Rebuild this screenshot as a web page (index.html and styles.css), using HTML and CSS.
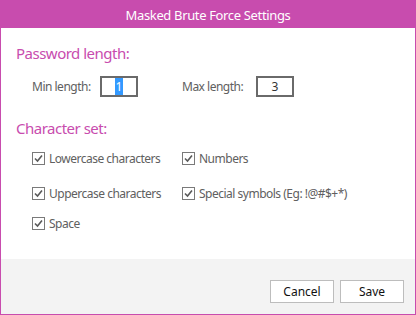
FILE: index.html
```html
<!DOCTYPE html>
<html>
<head>
    <title>Masked Brute Force Settings</title>
    <link rel="stylesheet" href="styles.css">
</head>
<body>
    <div class="window">
        <div class="titlebar">Masked Brute Force Settings</div>
        <div class="frame">
            <div class="content">
                <h2 class="section-title">Password length:</h2>
                <div class="length-row">
                    <label class="field-label min-label">Min length:</label>
                    <div class="num-box"><span class="selected">1</span></div>
                    <label class="field-label max-label">Max length:</label>
                    <div class="num-box">3</div>
                </div>

                <h2 class="section-title charset-title">Character set:</h2>
                <div class="check-grid">
                    <div class="check row1"><span class="box"><svg width="13" height="13" viewBox="0 0 13 13"><rect x="0.5" y="0.5" width="12" height="12" fill="#fff" stroke="#7a7a7a"/><path d="M3 6.5 L5.5 9 L10 3.5" fill="none" stroke="#5a5a5a" stroke-width="1.6"/></svg></span>Lowercase characters</div>
                    <div class="check row1"><span class="box"><svg width="13" height="13" viewBox="0 0 13 13"><rect x="0.5" y="0.5" width="12" height="12" fill="#fff" stroke="#7a7a7a"/><path d="M3 6.5 L5.5 9 L10 3.5" fill="none" stroke="#5a5a5a" stroke-width="1.6"/></svg></span>Numbers</div>
                    <div class="check row2"><span class="box"><svg width="13" height="13" viewBox="0 0 13 13"><rect x="0.5" y="0.5" width="12" height="12" fill="#fff" stroke="#7a7a7a"/><path d="M3 6.5 L5.5 9 L10 3.5" fill="none" stroke="#5a5a5a" stroke-width="1.6"/></svg></span>Uppercase characters</div>
                    <div class="check row2"><span class="box"><svg width="13" height="13" viewBox="0 0 13 13"><rect x="0.5" y="0.5" width="12" height="12" fill="#fff" stroke="#7a7a7a"/><path d="M3 6.5 L5.5 9 L10 3.5" fill="none" stroke="#5a5a5a" stroke-width="1.6"/></svg></span>Special symbols (Eg: !@#$+*)</div>
                    <div class="check row3"><span class="box"><svg width="13" height="13" viewBox="0 0 13 13"><rect x="0.5" y="0.5" width="12" height="12" fill="#fff" stroke="#7a7a7a"/><path d="M3 6.5 L5.5 9 L10 3.5" fill="none" stroke="#5a5a5a" stroke-width="1.6"/></svg></span>Space</div>
                </div>
            </div>
            <div class="footer">
                <button type="button">Cancel</button>
                <button type="button">Save</button>
            </div>
        </div>
    </div>
</body>
</html>
```

FILE: styles.css
```css
body {
    margin: 0;
    font-family: "Noto Sans", "Open Sans", sans-serif;
    background-color: #fff;
}

.window {
    width: 416px;
    height: 315px;
    display: flex;
    flex-direction: column;
}

.titlebar {
    height: 28px;
    line-height: 30px;
    background-color: #c84cae;
    color: #fff;
    text-align: center;
    font-size: 13px;
    letter-spacing: -0.35px;
}

.frame {
    flex: 1;
    display: flex;
    flex-direction: column;
    border: 1px solid #c84cae;
    border-top: none;
}

.content {
    flex: 1;
    background-color: #fff;
    padding: 14px 0 0 15px;
}

.section-title {
    margin: 0;
    font-weight: normal;
    font-size: 15px;
    letter-spacing: -0.5px;
    line-height: 22px;
    color: #c84cae;
}

.length-row {
    display: flex;
    align-items: center;
    margin-top: 12px;
    padding-left: 16px;
}

.field-label {
    font-size: 12px;
    letter-spacing: -0.5px;
    color: #606060;
}

.min-label {
    width: 68px;
}

.max-label {
    margin-left: 44px;
    width: 74px;
}

.num-box {
    width: 34px;
    height: 17px;
    border: 2px solid #6a6a6a;
    font-size: 12px;
    line-height: 17px;
    text-align: center;
    color: #333;
}

.selected {
    background-color: #3399ff;
    color: #fff;
    padding: 0 1px;
}

.charset-title {
    margin-top: 20px;
}

.check-grid {
    display: grid;
    grid-template-columns: 150px auto;
    padding-left: 16px;
    margin-top: 10px;
}

.check {
    display: flex;
    align-items: center;
    font-size: 12px;
    letter-spacing: -0.5px;
    color: #606060;
    height: 18px;
}

.row2 {
    margin-top: 17px;
}

.row3 {
    margin-top: 12px;
}

.box {
    display: inline-flex;
    margin-right: 4px;
}

.footer {
    height: 55px;
    background-color: #f3f3f3;
    display: flex;
    justify-content: flex-end;
    align-items: flex-start;
    gap: 6px;
    padding: 21px 11px 0 0;
    box-sizing: border-box;
}

button {
    width: 64px;
    height: 23px;
    background-color: #fff;
    border: 1px solid #bdbdbd;
    font-family: "Noto Sans", "Open Sans", sans-serif;
    font-size: 12px;
    color: #111;
    padding: 0;
}
```
